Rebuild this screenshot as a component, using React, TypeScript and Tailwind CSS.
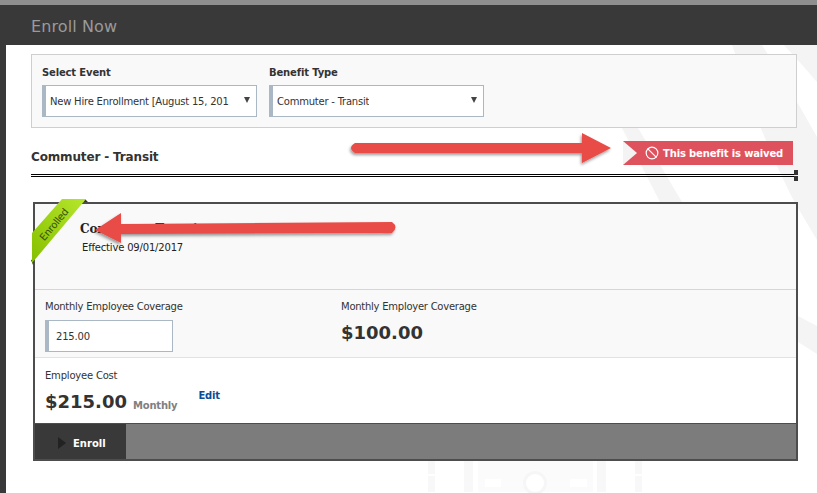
import { Ban } from "lucide-react";

const font = "font-['Tahoma','DejaVu_Sans',sans-serif]";

function Select({ value, width }: { value: string; width: string }) {
  return (
    <div
      className={`${width} h-[32px] flex items-center justify-between bg-white border border-[#a9b8c4] border-l-[4px] pl-[4px] pr-[6px] text-[10px] tracking-[-0.22px] text-[#333]`}
    >
      <span className="whitespace-nowrap overflow-hidden pt-[1px]">{value}</span>
      <span className="w-0 h-0 ml-2 mb-[3px] shrink-0 border-x-[3px] border-x-transparent border-t-[6px] border-t-[#444]" />
    </div>
  );
}

function Watermark() {
  return (
    <svg className="absolute left-0 top-0 pointer-events-none" width="817" height="493">
      <g fill="#f4f4f4">
        <path d="M732 45 C745 80 755 125 795 203 L817 240 L817 137 L800 107 C785 85 775 65 762 45 Z" />
        <path d="M784 45 L817 45 L817 82 Q800 62 784 45 Z" />
        <path d="M622 128 L638 128 L682 202 L660 202 Z" />
        <path d="M798 316 L817 326 L817 354 L798 342 Z" />
      </g>
      <g fill="#f8f8f8">
        <rect x="428" y="461" width="7" height="13" />
        <rect x="635" y="461" width="7" height="13" />
        <rect x="428" y="476" width="7" height="16" />
        <rect x="635" y="476" width="7" height="16" />
        <rect x="464" y="461" width="9" height="31" />
        <rect x="597" y="461" width="9" height="31" />
      </g>
      <rect x="478" y="461" width="115" height="31" fill="#fbfbfb" />
      <rect x="485" y="479" width="16" height="8" fill="#fff" />
      <rect x="570" y="479" width="17" height="8" fill="#fff" />
      <circle cx="535" cy="483" r="12" fill="#f6f6f6" />
      <circle cx="535" cy="483" r="9" fill="#fff" />
    </svg>
  );
}

function Arrows() {
  return (
    <svg className="absolute left-0 top-0 pointer-events-none" width="817" height="493">
      <defs>
        <filter id="sh" x="-5%" y="-30%" width="110%" height="170%">
          <feDropShadow dx="-1" dy="2" stdDeviation="1.5" floodColor="#000" floodOpacity="0.4" />
        </filter>
      </defs>
      <path
        d="M355 143 L582 143 L582 133 L611 148 L582 163 L582 153 L355 153 Q347 148 355 143 Z"
        fill="#e94c47"
        filter="url(#sh)"
      />
      <path
        d="M392 222 L121 224 L121 213 L95 230 L121 243 L121 234 L392 233 Q399 227 392 222 Z"
        fill="#e94c47"
        filter="url(#sh)"
      />
    </svg>
  );
}

export default function App() {
  return (
    <div className={`relative w-[817px] h-[493px] overflow-hidden bg-white ${font}`}>
      <Watermark />
      <div className="relative h-[5px] bg-[#8f8f8f]" />
      <div className="relative flex h-[488px]">
        <div className="w-[6px] bg-[#393939]" />
        <div className="flex-1 flex flex-col min-w-0">
          <div className="h-[40px] -ml-[6px] bg-[#393939] pl-[31px] pt-[3px] flex items-center">
            <h1 className="text-[16px] tracking-[0.1px] text-[#9a9a9a]">Enroll Now</h1>
          </div>
          <div className="flex-1">
            <div className="pl-[25px] pr-[20px] pt-[9px]">
              {/* Filters */}
              <div className="h-[74px] bg-[#f9f9f9] border border-[#cfcfcf] pl-[10px] pt-[10px] flex gap-[12px]">
                <div>
                  <div className="text-[10px] tracking-[-0.15px] font-bold text-[#333] leading-[14px] pt-[1px] mb-[5px]">Select Event</div>
                  <Select value="New Hire Enrollment [August 15, 201" width="w-[215px]" />
                </div>
                <div>
                  <div className="text-[10px] tracking-[-0.15px] font-bold text-[#333] leading-[14px] pt-[1px] mb-[5px]">Benefit Type</div>
                  <Select value="Commuter - Transit" width="w-[215px]" />
                </div>
              </div>

              {/* Section heading */}
              <div className="h-[46px] flex items-center justify-between pt-[11px]">
                <h2 className="text-[12px] tracking-[-0.15px] font-bold text-[#333]">Commuter - Transit</h2>
                <div className="relative mr-[4px] -mt-[7px] h-[24px] w-[170px] bg-[#de525e] flex items-center gap-[4px] pl-[22px] text-[10px] tracking-[-0.15px] font-bold text-white whitespace-nowrap">
                  <span className="absolute left-0 top-0 w-0 h-0 border-y-[12px] border-y-transparent border-l-[14px] border-l-[#f3f3f3]" />
                  <Ban size={14} strokeWidth={2} />
                  This benefit is waived
                </div>
              </div>
              <div className="relative h-[3px] border-y border-black">
                <span className="absolute -right-[1px] -top-[5px] w-[4px] h-[5px] bg-[#333]" />
                <span className="absolute -right-[1px] top-[1px] w-[4px] h-[5px] bg-[#333]" />
              </div>

              {/* Benefit card */}
              <div className="relative ml-[2px] -mr-[1px] mt-[25px] border-2 border-[#4d4d4d] text-[#333] h-[259px] flex flex-col">
                <div className="h-[86px] bg-[#f9f9f9] border-b border-[#d6d6d6] pl-[46px] pt-[37px]">
                  <div className="text-[10px] tracking-[-0.18px] leading-[14px] pl-[1px] text-[#222]">Effective 09/01/2017</div>
                </div>
                <div className="h-[68px] bg-[#f9f9f9] border-b border-[#e2e2e2] grid grid-cols-[296px_1fr] pl-[10px] pt-[10px]">
                  <div>
                    <div className="text-[10px] tracking-[-0.25px] leading-[14px] mb-[6px]">Monthly Employee Coverage</div>
                    <div className="w-[128px] h-[32px] bg-white border border-[#a9b8c4] border-l-[4px] pl-[7px] pt-[1px] flex items-center text-[10px] tracking-[-0.2px]">
                      215.00
                    </div>
                  </div>
                  <div>
                    <div className="text-[10px] tracking-[-0.25px] leading-[14px] mb-[5px]">Monthly Employer Coverage</div>
                    <div className="text-[18px] font-bold leading-[28px]">$100.00</div>
                  </div>
                </div>
                <div className="flex-1 bg-white pl-[10px] pt-[11px]">
                  <div className="text-[10px] tracking-[-0.2px] leading-[14px] mb-[5px]">Employee Cost</div>
                  <div className="flex items-start">
                    <span className="text-[18px] font-bold leading-[28px]">$215.00</span>
                    <span className="text-[10px] tracking-[-0.2px] font-bold text-[#808080] ml-[6px] mt-[10px]">Monthly</span>
                    <span className="text-[10px] tracking-[-0.2px] font-bold text-[#0a4d96] ml-[21px]">Edit</span>
                  </div>
                </div>
                <div className="h-[36px] mt-[1px] border-t border-[#4d4d4d] bg-[#7c7c7c] flex">
                  <div className="w-[91px] bg-[#393939] flex items-center gap-[7px] pl-[23px] pt-[3px] text-[10px] font-bold text-white">
                    <span className="w-0 h-0 border-y-[6px] border-y-transparent border-l-[8px] border-l-[#222]" />
                    Enroll
                  </div>
                </div>
                {/* Ribbon */}
                <svg className="absolute -left-[4px] -top-[5px]" width="58" height="66">
                  <defs>
                    <linearGradient id="rb" x1="0" y1="1" x2="1" y2="0">
                      <stop offset="0" stopColor="#86c000" />
                      <stop offset="1" stopColor="#b6e62c" />
                    </linearGradient>
                  </defs>
                  <path d="M54 0 L57 3 L52 3 Z M0 61 L2 66 L3 60 Z" fill="#333" />
                  <path d="M1 34 L31 0 L55 0 L1 64 Z" fill="url(#rb)" />
                </svg>
                <span className="absolute -left-[3px] top-[13px] w-[44px] text-center -rotate-[50deg] text-[10px] tracking-[-0.3px] text-[#35500a]">
                  Enrolled
                </span>
                <div className="absolute left-[45px] top-[18px] text-[12px] font-bold text-[#222] leading-[14px] font-['DejaVu_Serif',serif]">
                  Commuter Transit
                </div>
              </div>
            </div>
          </div>
        </div>
      </div>
      <Arrows />
    </div>
  );
}
